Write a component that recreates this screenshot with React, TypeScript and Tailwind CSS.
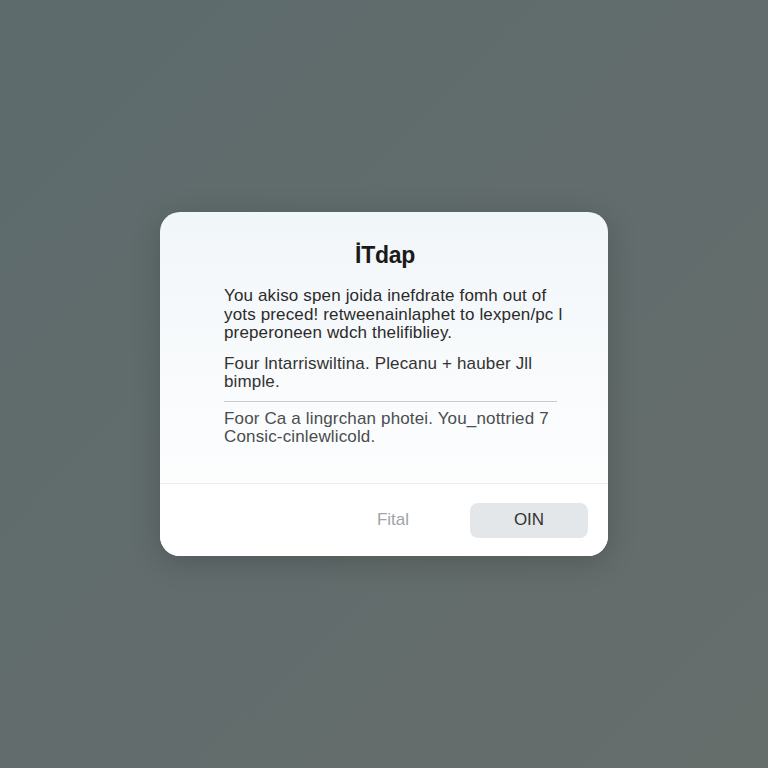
export default function App() {
  return (
    <div
      className="w-[768px] h-[768px] flex items-center justify-center bg-gradient-to-br from-[#5d6b6c] via-[#626c6c] to-[#666e6c]"
      style={{ fontFamily: '"Liberation Sans", Arial, sans-serif' }}
    >
      <div className="w-[448px] h-[344px] rounded-[20px] flex flex-col overflow-hidden bg-gradient-to-b from-[#f1f6f9] via-[#f9fbfc] to-white shadow-[0_6px_30px_rgba(0,0,0,0.18)]">
        <h1 className="pt-[30px] pl-[2px] text-center text-[23px] leading-[26px] font-bold text-[#1a1a1a] tracking-[-0.3px]">
          İTdap
        </h1>
        <div className="pl-16 pr-[40px]">
          <p className="mt-[19px] text-[17px] leading-[18.5px] tracking-[0.15px] text-[#2b2b2b] whitespace-nowrap">
            You akiso spen joida inefdrate fomh out of
            <br />
            yots preced! retweenainlaphet to lexpen/pc l
            <br />
            preperoneen wdch thelifibliey.
          </p>
          <p className="mt-[12px] text-[17px] leading-[18.5px] tracking-[0.15px] text-[#333] whitespace-nowrap">
            Four lntarriswiltina. Plecanu + hauber Jll
            <br />
            bimple.
          </p>
          <div className="mt-[9px] mr-[11px] h-px bg-[#c9cccf]" />
          <p className="mt-[8px] text-[17px] leading-[18.5px] tracking-[0.15px] text-[#4a4d50] whitespace-nowrap">
            Foor Ca a lingrchan photei. You_nottried 7
            <br />
            Consic-cinlewlicold.
          </p>
        </div>
        <div className="mt-auto h-[73px] border-t border-[#eceff1] bg-white flex items-center justify-end pr-5 gap-[18px]">
          <button className="w-[118px] h-[35px] text-[17px] text-[#a0a4a8]">Fital</button>
          <button className="w-[118px] h-[35px] rounded-[8px] bg-[#e4e7ea] text-[17px] text-[#333]">OIN</button>
        </div>
      </div>
    </div>
  );
}
